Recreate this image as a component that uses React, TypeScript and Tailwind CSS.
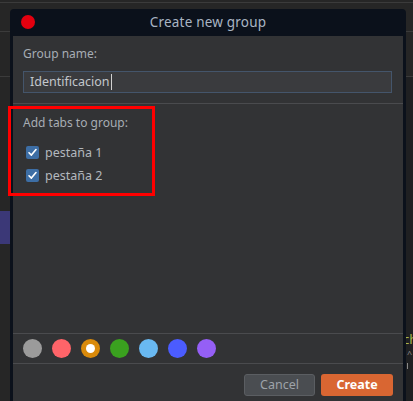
import React from 'react';

const swatches = [
  { id: 'grey', color: 'bg-[#9b9b9b]' },
  { id: 'red', color: 'bg-[#ff6469]' },
  { id: 'orange', color: 'bg-[#d98a0b]', selected: true },
  { id: 'green', color: 'bg-[#3aa11f]' },
  { id: 'cyan', color: 'bg-[#69b9f2]' },
  { id: 'blue', color: 'bg-[#4b5cff]' },
  { id: 'purple', color: 'bg-[#955ff6]' },
];

const tabs = ['pestaña 1', 'pestaña 2'];

const Checkbox = () => (
  <span className="flex w-[13px] h-[13px] items-center justify-center rounded-[2px] bg-[#3d6ea5]">
    <svg viewBox="0 0 12 12" className="w-[11px] h-[11px]">
      <path d="M2.2 6.3 L4.8 8.8 L9.8 2.8" fill="none" stroke="#ffffff" strokeWidth="1.8" strokeLinecap="round" strokeLinejoin="round" />
    </svg>
  </span>
);

const App = () => {
  return (
    <div
      className="relative w-[413px] h-[401px] overflow-hidden bg-[#262626] flex flex-col"
      style={{ fontFamily: '"Noto Sans", "Open Sans", sans-serif' }}
    >
      <div className="h-[3px] shrink-0 border-b border-[#3b3b3b]" />

      <div className="flex flex-1 min-h-0">
        {/* left edge of the app behind */}
        <div className="w-[10px] shrink-0 flex flex-col">
          <div className="h-[29px] border-b border-[#3b3b3b]" />
          <div className="h-[45px] border-b border-[#3b3b3b]" />
          <div className="h-[134px]" />
          <div className="h-[33px] bg-[#3b3877]" />
        </div>

        {/* dialog */}
        <div className="mt-[6px] w-[396px] shrink-0 flex flex-col rounded-t-[4px] bg-[#0b111b] px-[3px]">
          <div className="relative h-[27px] shrink-0 flex items-center justify-center">
            <span className="absolute left-[8px] top-[6px] w-[14px] h-[14px] rounded-full bg-[#e3000f]" />
            <span className="text-[13.5px] text-[#a9b5c3] tracking-[0.2px]">Create new group</span>
          </div>

          <div className="flex-1 flex flex-col bg-[#323335] text-[12px] text-[#a7adb4]">
            <div className="px-[10px] pt-[9px] pb-[10px] border-b border-[#4a4b4e]">
              <div className="leading-[18px]">Group name:</div>
              <div className="mt-[8px] mr-[1px] h-[22px] flex items-center border border-[#44556b] bg-[#3a3b3e] px-[6px] text-[12.5px] text-[#c3c7cc]">
                Identificacion
                <span className="ml-[1px] w-px h-[16px] bg-[#d0d0d0]" />
              </div>
            </div>

            <div className="flex-1 px-[10px] pt-[10px] border-b border-[#4a4b4e]">
              <div className="leading-[18px]">Add tabs to group:</div>
              <div className="mt-[14px] flex flex-col gap-[10px]">
                {tabs.map((tab) => (
                  <label key={tab} className="flex items-center gap-[6px] pl-[3px] h-[13px] text-[12.5px] text-[#b3b8be]">
                    <Checkbox />
                    <span className="leading-[13px]">{tab}</span>
                  </label>
                ))}
              </div>
            </div>

            <div className="h-[30px] shrink-0 flex items-center gap-[10px] px-[10px] border-b border-[#4a4b4e]">
              {swatches.map((s) => (
                <span key={s.id} className={`flex w-[19px] h-[19px] items-center justify-center rounded-full ${s.color}`}>
                  {s.selected && <span className="w-[9px] h-[9px] rounded-full bg-white" />}
                </span>
              ))}
            </div>

            <div className="h-[37px] shrink-0 flex items-start justify-end gap-[6px] pt-[10px] pr-[10px]">
              <button className="w-[71px] h-[22px] rounded-[3px] border border-[#5b5e62] bg-[#4a4d51] text-[12.5px] text-[#9ea3a9]">
                Cancel
              </button>
              <button className="w-[72px] h-[22px] rounded-[3px] bg-[#d96632] text-[12.5px] font-bold text-white">
                Create
              </button>
            </div>
          </div>
        </div>

        {/* right edge of the app behind */}
        <div className="flex-1 flex flex-col overflow-hidden bg-[#1f2022]">
          <div className="h-[29px] border-b border-[#3b3b3b] bg-[#262626]" />
          <div className="h-[45px] border-b border-[#3b3b3b] bg-[#262626]" />
          <div className="h-[254px]" />
          <div className="-ml-[3px] text-[13px] leading-[16px] text-[#a7b84c] whitespace-nowrap">ch</div>
          <div className="ml-[1px] mt-[2px] text-[9px] leading-[10px] text-[#8a8a8a]">^</div>
          <div className="ml-[1px] mt-[4px] w-px h-[6px] bg-[#8a8a8a]" />
        </div>
      </div>

      {/* red annotation box over the dialog */}
      <div className="absolute left-[8px] top-[106px] w-[147px] h-[90px] border-[3px] border-[#ff0000]" />
    </div>
  );
};

export default App;
